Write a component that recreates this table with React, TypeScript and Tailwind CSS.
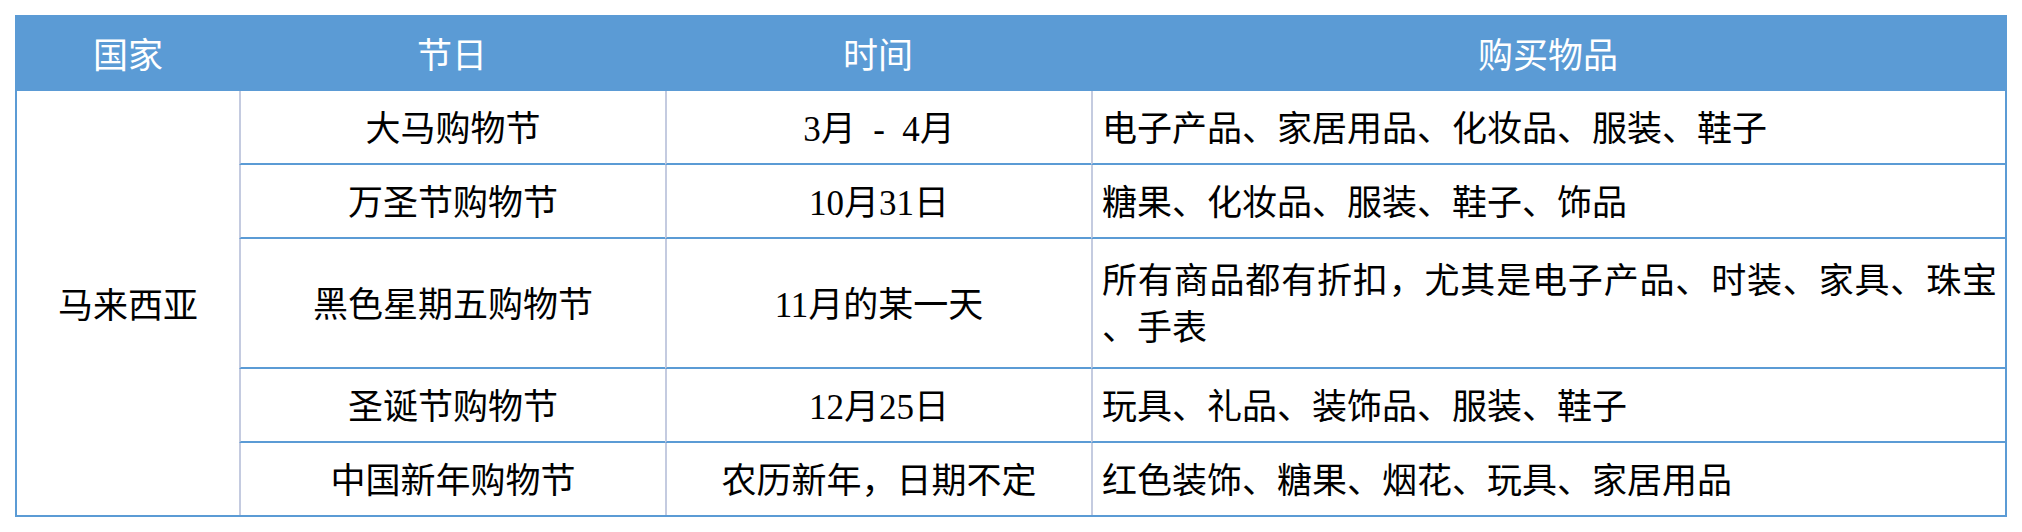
const font = "font-['Liberation_Serif','Noto_Sans_CJK_SC',serif]";

type Row = {
  festival: string;
  time: string;
  items: string[];
  height: string;
  last?: boolean;
};

const rows: Row[] = [
  {
    festival: "大马购物节",
    time: "3月\u2002-\u20024月",
    items: ["电子产品、家居用品、化妆品、服装、鞋子"],
    height: "h-[74px]",
  },
  {
    festival: "万圣节购物节",
    time: "10月31日",
    items: ["糖果、化妆品、服装、鞋子、饰品"],
    height: "h-[74px]",
  },
  {
    festival: "黑色星期五购物节",
    time: "11月的某一天",
    items: ["所有商品都有折扣，尤其是电子产品、时装、家具、珠宝", "、手表"],
    height: "h-[130px]",
  },
  {
    festival: "圣诞节购物节",
    time: "12月25日",
    items: ["玩具、礼品、装饰品、服装、鞋子"],
    height: "h-[74px]",
  },
  {
    festival: "中国新年购物节",
    time: "农历新年，日期不定",
    items: ["红色装饰、糖果、烟花、玩具、家居用品"],
    height: "h-[72px]",
    last: true,
  },
];

export default function App() {
  return (
    <div className={`min-h-[532px] w-[2022px] bg-white pt-[15px] pl-[15px] ${font} text-[35px] leading-[47px] text-black`}>
      <div className="w-[1992px] border-2 border-[#5b9bd5]">
        {/* Header */}
        <div className="grid h-[74px] grid-cols-[222px_426px_426px_1fr] bg-[#5b9bd5] text-white">
          <div className="flex items-center justify-center pt-[4px]">国家</div>
          <div className="flex items-center justify-center pt-[4px]">节日</div>
          <div className="flex items-center justify-center pt-[4px]">时间</div>
          <div className="flex items-center justify-center pt-[4px]">购买物品</div>
        </div>

        {/* Body */}
        <div className="grid grid-cols-[222px_426px_426px_1fr]">
          <div className="row-span-5 flex items-center justify-center pt-[6px]">马来西亚</div>
          {rows.map((r) => (
            <div key={r.festival} className="contents">
              <div
                className={`${r.height} flex items-center justify-center border-l-2 border-[#c4cbe0] pt-[4px] ${
                  r.last ? "" : "border-b-2 border-b-[#5b9bd5]"
                }`}
              >
                {r.festival}
              </div>
              <div
                className={`${r.height} flex items-center justify-center whitespace-pre border-l-2 border-[#c4cbe0] pt-[4px] ${
                  r.last ? "" : "border-b-2 border-b-[#5b9bd5]"
                }`}
              >
                {r.time}
              </div>
              <div
                className={`${r.height} flex flex-col justify-center border-l-2 border-[#c4cbe0] pl-[9px] pr-[8px] pt-[4px] ${
                  r.last ? "" : "border-b-2 border-b-[#5b9bd5]"
                }`}
              >
                {r.items.length > 1 ? (
                  <>
                    <div className="whitespace-nowrap text-justify [text-align-last:justify]">{r.items[0]}</div>
                    <div className="whitespace-nowrap">{r.items[1]}</div>
                  </>
                ) : (
                  <div className="whitespace-nowrap">{r.items[0]}</div>
                )}
              </div>
            </div>
          ))}
        </div>
      </div>
    </div>
  );
}
